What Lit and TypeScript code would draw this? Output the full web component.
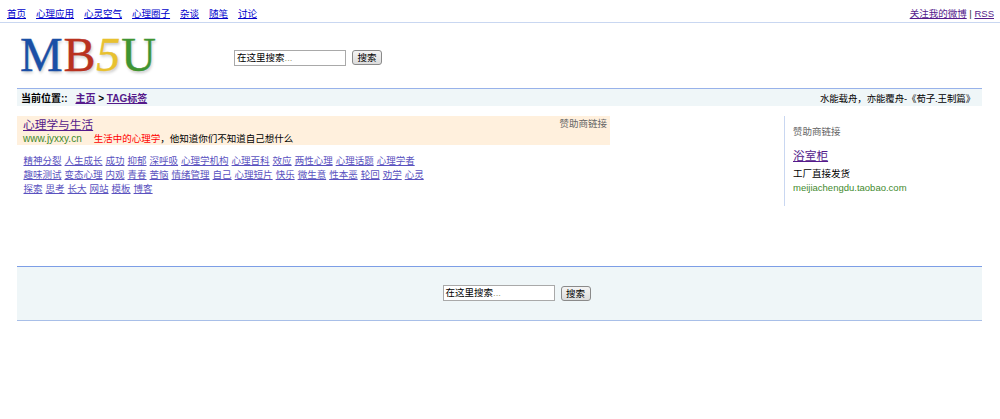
import { LitElement, html, css } from "lit";
import { customElement } from "lit/decorators.js";

const CJK = `"Liberation Sans", "Noto Sans CJK SC", sans-serif`;
const navItems = ["首页", "心理应用", "心灵空气", "心理圈子", "杂谈", "随笔", "讨论"];
const tags = [
  "精神分裂", "人生成长", "成功", "抑郁", "深呼吸", "心理学机构", "心理百科", "效应", "两性心理", "心理话题", "心理学者",
  "趣味测试", "变态心理", "内观", "青春", "苦恼", "情绪管理", "自己", "心理短片", "快乐", "微生意", "性本恶", "轮回", "劝学", "心灵",
  "探索", "思考", "长大", "网站", "模板", "博客",
];

@customElement("app-root")
export class AppRoot extends LitElement {
  static styles = css`
    :host {
      display: block;
      width: 1000px;
      height: 419px;
      overflow: hidden;
      background: #fff;
      font-family: ${css([CJK] as any)};
      font-size: 9.5px;
      color: #000;
    }
    a { color: #00c; }
    .top {
      display: flex;
      justify-content: space-between;
      box-sizing: border-box;
      height: 23px;
      padding: 7px 6px 0 7px;
      line-height: 13px;
      border-bottom: 1px solid #c9d7f1;
    }
    .nav { display: flex; gap: 10px; }
    .top-right { color: #333; }
    .top-right a { color: #551a8b; }
    .head {
      display: flex;
      height: 65px;
      padding-left: 20px;
      box-sizing: border-box;
    }
    .logo {
      width: 214px;
      padding-top: 4px;
      font: 48px/56px "Liberation Serif", serif;
      letter-spacing: 0.8px;
      -webkit-text-stroke: 0.4px currentColor;
      text-shadow: 1px 2px 3px rgba(0, 0, 0, 0.22);
    }
    .blue { color: #1a4fa6; }
    .red { color: #b9321f; }
    .yellow { color: #e8c12f; font-style: italic; }
    .green { color: #3f9431; }
    .search { display: flex; align-items: center; gap: 6px; }
    .head .search { padding-top: 9px; height: 60px; box-sizing: border-box; }
    .field {
      box-sizing: border-box;
      width: 112px;
      height: 16px;
      padding: 0 2px;
      border: 1px solid #a9a9a9;
      background: #fff;
      font: 9.5px/14px ${css([CJK] as any)};
      color: #000;
    }
    .field span { color: #a09a70; }
    .btn {
      box-sizing: border-box;
      width: 30px;
      height: 15px;
      padding: 0;
      border: 1px solid #8a8a8a;
      border-radius: 3px;
      background: linear-gradient(#f4f4f4, #dcdcdc);
      font: 9.5px/13px ${css([CJK] as any)};
      color: #000;
    }
    .crumb {
      display: flex;
      justify-content: space-between;
      align-items: center;
      box-sizing: border-box;
      height: 18px;
      margin: 0 18px 0 17px;
      padding: 0 7px 0 4px;
      border-top: 1px solid #98b2ea;
      background: #eff6f8;
      font-size: 10px;
      font-weight: bold;
    }
    .crumb a { color: #551a8b; }
    .crumb .home { margin-left: 5px; }
    .quote { font-size: 9.5px; font-weight: normal; letter-spacing: -0.15px; }
    .main {
      display: flex;
      margin: 10px 18px 0 17px;
      height: 150px;
    }
    .left { width: 767px; }
    .ad {
      position: relative;
      box-sizing: border-box;
      width: 593px;
      height: 29px;
      padding: 0 6px;
      background: #fff0dd;
    }
    .ad-title { display: block; font-size: 11.7px; line-height: 17px; color: #551a8b; }
    .ad-line { line-height: 12px; white-space: pre; }
    .url { color: #3f8a2e; }
    .ad .url { font-size: 10px; }
    .hot { color: #f00; margin-left: 12px; }
    .sponsor { color: #666; }
    .ad .sponsor { position: absolute; top: 1px; right: 3px; line-height: 13px; }
    .tags {
      display: flex;
      flex-wrap: wrap;
      gap: 1px 3px;
      width: 402px;
      margin: 9px 0 0 6.5px;
      line-height: 13px;
    }
    .tags a { color: #5a52c0; }
    .side {
      box-sizing: border-box;
      width: 198px;
      height: 90px;
      padding: 9px 0 0 8px;
      border-left: 1px solid #c9d7f1;
    }
    .side .sponsor { line-height: 13px; }
    .side-title { display: block; margin-top: 10px; font-size: 11.7px; line-height: 16px; color: #551a8b; }
    .side-text { margin-top: 3px; line-height: 13px; }
    .side .url { display: block; font-size: 9.5px; line-height: 15px; }
    .bottom {
      display: flex;
      justify-content: center;
      align-items: center;
      box-sizing: border-box;
      height: 55px;
      margin: 0 18px 0 17px;
      border-top: 1px solid #7d9ee6;
      border-bottom: 1px solid #a8bfe8;
      background: #eff6f8;
    }
    .bottom .search { margin-left: 34px; margin-top: -1px; }
  `;

  private search() {
    return html`<div class="search">
      <div class="field">在这里搜索<span>...</span></div>
      <button class="btn">搜索</button>
    </div>`;
  }

  render() {
    return html`
      <div class="top">
        <div class="nav">${navItems.map((n) => html`<a href="#">${n}</a>`)}</div>
        <div class="top-right"><a href="#">关注我的微博</a> | <a href="#">RSS</a></div>
      </div>
      <div class="head">
        <div class="logo"><span class="blue">M</span><span class="red">B</span><span class="yellow">5</span><span class="green">U</span></div>
        ${this.search()}
      </div>
      <div class="crumb">
        <div>当前位置:: <a class="home" href="#">主页</a> &gt; <a href="#">TAG标签</a></div>
        <div class="quote">水能载舟，亦能覆舟-《荀子.王制篇》</div>
      </div>
      <div class="main">
        <div class="left">
          <div class="ad">
            <a class="ad-title" href="#">心理学与生活</a>
            <div class="ad-line"><span class="url">www.jyxxy.cn</span><span class="hot">生活中的心理学</span>，他知道你们不知道自己想什么</div>
            <div class="sponsor">赞助商链接</div>
          </div>
          <div class="tags">${tags.map((t) => html`<a href="#">${t}</a>`)}</div>
        </div>
        <div class="side">
          <div class="sponsor">赞助商链接</div>
          <a class="side-title" href="#">浴室柜</a>
          <div class="side-text">工厂直接发货</div>
          <span class="url">meijiachengdu.taobao.com</span>
        </div>
      </div>
      <div class="bottom">${this.search()}</div>
    `;
  }
}
